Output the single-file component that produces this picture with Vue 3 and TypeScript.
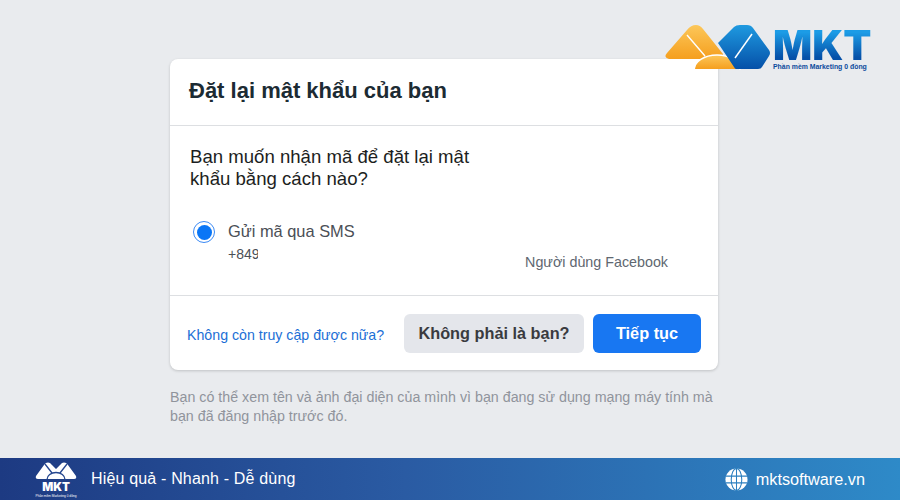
<script setup lang="ts">
const title = 'Đặt lại mật khẩu của bạn'
</script>

<template>
  <div class="page">
    <main class="main">
      <section class="card">
        <h1 class="title">{{ title }}</h1>
        <div class="body">
          <p class="question">Bạn muốn nhận mã để đặt lại mật<br />khẩu bằng cách nào?</p>
          <div class="option-row">
            <div class="option">
              <span class="radio"><span class="dot"></span></span>
              <div class="option-text">
                <div class="option-label">Gửi mã qua SMS</div>
                <div class="phone">+849</div>
              </div>
            </div>
            <div class="user">Người dùng Facebook</div>
          </div>
        </div>
        <div class="actions">
          <a class="link">Không còn truy cập được nữa?</a>
          <button class="btn grey">Không phải là bạn?</button>
          <button class="btn blue">Tiếp tục</button>
        </div>
      </section>
      <p class="note">Bạn có thể xem tên và ảnh đại diện của mình vì bạn đang sử dụng mạng máy tính mà<br />bạn đã đăng nhập trước đó.</p>
    </main>

    <footer class="footer">
      <div class="foot-left">
        <div class="foot-logo">
          <svg class="foot-mark" viewBox="0 0 42 22" width="42" height="22">
            <path d="M1 17 L9 6 Q11.500 2.500 15 4 L21 10 L27 4 Q30.500 2.500 33 6 L41 17 Q42 20 39 20 L3 20 Q0 20 1 17Z" fill="#fff" />
            <path d="M10 5 L17 14 M32 5 L25 14" stroke="#24468f" stroke-width="1.3" fill="none" />
            <path d="M12 20.500 A9 7 0 0 1 30 20.500" stroke="#24468f" stroke-width="1.3" fill="none" />
          </svg>
          <div class="foot-mkt">MKT</div>
          <div class="foot-sub">Phần mềm Marketing 0 đồng</div>
        </div>
        <span class="slogan">Hiệu quả - Nhanh - Dễ dùng</span>
      </div>
      <div class="foot-right">
        <svg class="globe" viewBox="0 0 24 24" width="23" height="23">
          <circle cx="12" cy="12" r="11.500" fill="#fff" />
          <g stroke="#2b7fc0" stroke-width="1.100" fill="none">
            <ellipse cx="12" cy="12" rx="5.500" ry="11.500" />
            <path d="M12 0.500V23.500M1 8.500H23M1 15.500H23" />
          </g>
        </svg>
        <span class="site">mktsoftware.vn</span>
      </div>
    </footer>

    <div class="brand">
      <svg class="brand-mark" viewBox="0 0 120 60" width="120" height="60">
        <defs>
          <linearGradient id="yg" x1="0" y1="0" x2="0" y2="1">
            <stop offset="0" stop-color="#fcc75a" />
            <stop offset="1" stop-color="#f59f1e" />
          </linearGradient>
          <linearGradient id="bg" x1="0" y1="0" x2="0" y2="1">
            <stop offset="0" stop-color="#1f9ae0" />
            <stop offset="1" stop-color="#0550a8" />
          </linearGradient>
        </defs>
        <path d="M17 43 L37 20 Q41 15 46 15 Q50 15 53 19 L73 44 L73 49 L19 49 Q13 47 17 43 Z" fill="url(#yg)" />
        <path d="M45 59 A22 14 0 0 1 89 59 Z" fill="url(#yg)" />
        <path d="M37 25 L55 46 M44 60 A23 15 0 0 1 90 60" stroke="#fff" stroke-width="1.400" fill="none" />
        <path d="M68 33 L84 17 Q86 15 90 15 H97 Q101 15 103 18 L119 40 Q121 43 119 46 L112 57 Q111 59 108 59 H86 Q85 59 84 57 Z" fill="url(#bg)" />
        <path d="M102 24 L85 48" stroke="#fff" stroke-width="1.500" fill="none" />
      </svg>
      <div class="brand-text">
        <div class="brand-mkt">MKT</div>
        <div class="brand-sub">Phần mềm Marketing 0 đồng</div>
      </div>
    </div>
  </div>
</template>

<style>
html, body { margin: 0; padding: 0; }
</style>

<style scoped>
.page {
  position: relative;
  width: 900px;
  height: 500px;
  overflow: hidden;
  display: flex;
  flex-direction: column;
  background: #e9ebee;
  font-family: "Liberation Sans", Arial, sans-serif;
}
.main {
  flex: 1;
  padding: 59px 0 0 170px;
}
.card {
  width: 548px;
  height: 311px;
  box-sizing: border-box;
  display: flex;
  flex-direction: column;
  background: #fff;
  border-radius: 8px;
  box-shadow: 0 1px 3px rgba(0, 0, 0, 0.18);
}
.title {
  margin: 0;
  height: 67px;
  box-sizing: border-box;
  padding: 18px 0 0 19px;
  font-size: 22px;
  line-height: 28px;
  font-weight: 700;
  color: #1c2b33;
  border-bottom: 1px solid #dddfe2;
}
.body {
  flex: 1;
  padding: 20px 50px 0 20px;
}
.question {
  margin: 0;
  font-size: 18.6px;
  line-height: 22px;
  color: #1c1e21;
}
.option-row {
  display: flex;
  justify-content: space-between;
  align-items: flex-start;
  margin-top: 31px;
}
.option {
  display: flex;
  gap: 13px;
  padding-left: 3px;
}
.radio {
  width: 22px;
  height: 22px;
  box-sizing: border-box;
  border: 1.5px solid #3b8af5;
  border-radius: 50%;
  display: flex;
  align-items: center;
  justify-content: center;
}
.dot {
  width: 15px;
  height: 15px;
  background: #0a76f6;
  border-radius: 50%;
}
.option-label {
  font-size: 16.4px;
  line-height: 20px;
  color: #4b4f56;
}
.phone {
  width: 30px;
  overflow: hidden;
  margin-top: 4px;
  font-size: 14px;
  line-height: 18px;
  color: #4b4f56;
}
.user {
  margin-top: 32px;
  font-size: 14.3px;
  line-height: 18px;
  color: #606770;
}
.actions {
  height: 75px;
  box-sizing: border-box;
  border-top: 1px solid #dddfe2;
  display: flex;
  align-items: center;
  padding: 0 17px;
}
.link {
  flex: none;
  width: 198px;
  white-space: nowrap;
  font-size: 14.2px;
  color: #1c6fd6;
  margin-right: 19px;
  margin-top: 3px;
}
.btn {
  flex: none;
  height: 39px;
  border: 0;
  border-radius: 6px;
  font-family: inherit;
  font-size: 16.3px;
  font-weight: 700;
  padding: 0;
}
.grey {
  width: 180px;
  background: #e4e6eb;
  color: #3a3b3f;
  margin-right: 9px;
}
.blue {
  width: 108px;
  background: #1877f2;
  color: #fff;
}
.note {
  margin: 18px 0 0;
  font-size: 14.25px;
  line-height: 19px;
  color: #90949c;
}
.footer {
  height: 42px;
  flex: none;
  display: flex;
  align-items: center;
  justify-content: space-between;
  padding: 0 35px;
  background: linear-gradient(90deg, #1d3a82 0%, #2a5ba3 45%, #2e8ac8 100%);
  color: #fff;
}
.foot-left, .foot-right {
  display: flex;
  align-items: center;
}
.foot-logo {
  width: 42px;
  height: 40px;
  margin-right: 14px;
  display: flex;
  flex-direction: column;
  align-items: center;
}
.foot-mark { display: block; flex: none; height: 22px; }
.foot-mkt {
  font-family: Inter, "Liberation Sans", sans-serif;
  font-size: 11.5px;
  line-height: 13px;
  font-weight: 900;
}
.foot-sub {
  font-size: 3.2px;
  line-height: 4px;
  white-space: nowrap;
}
.slogan {
  font-size: 16px;
  letter-spacing: 0.17px;
}
.globe { margin-right: 8px; }
.site {
  font-size: 16.25px;
}
.brand {
  position: absolute;
  top: 10px;
  left: 650px;
  width: 240px;
  height: 60px;
  display: flex;
}
.brand-mark { flex: none; }
.brand-text {
  margin: 17px 0 0 3px;
}
.brand-mkt {
  font-family: Inter, "Liberation Sans", sans-serif;
  font-size: 41px;
  line-height: 36px;
  font-weight: 900;
  background: linear-gradient(180deg, #1c9ce6 15%, #0550a8 85%);
  -webkit-background-clip: text;
  background-clip: text;
  color: transparent;
}
.brand-sub {
  font-size: 6.9px;
  line-height: 8px;
  font-weight: 700;
  color: #0c4a9c;
  white-space: nowrap;
}
</style>
